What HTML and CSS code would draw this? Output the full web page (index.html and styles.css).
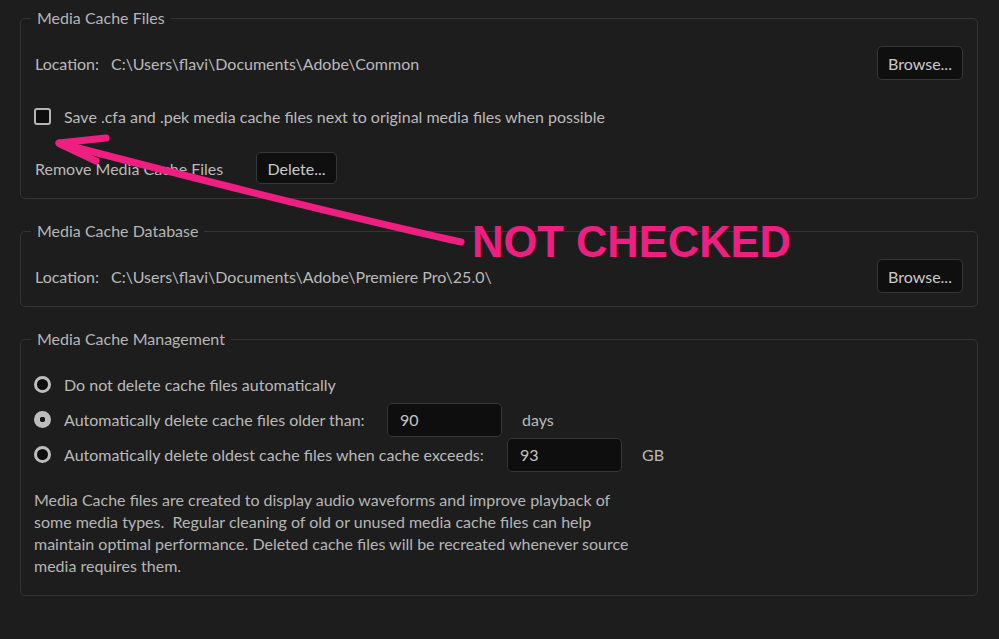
FILE: index.html
```html
<!DOCTYPE html>
<html lang="en">
<head>
    <meta charset="UTF-8">
    <meta name="viewport" content="width=device-width, initial-scale=1.0">
    <title>Media Cache</title>
    <link rel="stylesheet" href="styles.css">
</head>
<body>
    <div class="prefs">
        <fieldset class="group group-files">
            <legend>Media Cache Files</legend>
            <div class="row location-row">
                <span class="label">Location:</span>
                <span class="path">C:\Users\flavi\Documents\Adobe\Common</span>
                <button class="btn browse">Browse...</button>
            </div>
            <label class="row check-row">
                <span class="checkbox"></span>
                <span>Save .cfa and .pek media cache files next to original media files when possible</span>
            </label>
            <div class="row remove-row">
                <span class="remove-label">Remove Media Cache Files</span>
                <button class="btn delete">Delete...</button>
            </div>
        </fieldset>

        <fieldset class="group group-db">
            <legend>Media Cache Database</legend>
            <div class="row location-row">
                <span class="label">Location:</span>
                <span class="path">C:\Users\flavi\Documents\Adobe\Premiere Pro\25.0\</span>
                <button class="btn browse">Browse...</button>
            </div>
        </fieldset>

        <fieldset class="group group-manage">
            <legend>Media Cache Management</legend>
            <div class="radio-list">
                <label class="row radio-row">
                    <span class="radio"></span>
                    <span>Do not delete cache files automatically</span>
                </label>
                <label class="row radio-row">
                    <span class="radio selected"></span>
                    <span class="radio-label older">Automatically delete cache files older than:</span>
                    <span class="field">90</span>
                    <span class="unit">days</span>
                </label>
                <label class="row radio-row">
                    <span class="radio"></span>
                    <span class="radio-label exceeds">Automatically delete oldest cache files when cache exceeds:</span>
                    <span class="field">93</span>
                    <span class="unit">GB</span>
                </label>
            </div>
            <p class="note">Media Cache files are created to display audio waveforms and improve playback of<br>some media types.&nbsp; Regular cleaning of old or unused media cache files can help<br>maintain optimal performance. Deleted cache files will be recreated whenever source<br>media requires them.</p>
        </fieldset>
    </div>

    <!-- annotation drawn over the dialog -->
    <svg class="annotation" width="999" height="639" viewBox="0 0 999 639">
        <path d="M461,242 Q 300,206 59,143" />
        <path d="M59,143 L 106,138" />
        <path d="M60,144 L 96,161" />
    </svg>
    <div class="callout">NOT CHECKED</div>
</body>
</html>
```

FILE: styles.css
```css
* {
    margin: 0;
    padding: 0;
    box-sizing: border-box;
}

body {
    position: relative;
    width: 999px;
    height: 639px;
    overflow: hidden;
    background: #1d1d1d;
    color: #bababa;
    font-family: Lato, "Noto Sans", sans-serif;
    font-size: 16px;
}

.prefs {
    padding: 8px 0 0 20px;
    width: 978px;
}

.group {
    border: 1px solid #343434;
    border-radius: 5px;
    padding: 0 14px;
    margin-bottom: 22px;
}

.group legend {
    margin-left: -4px;
    padding: 0 6px;
    line-height: 20px;
    height: 20px;
    color: #b6b6b6;
}

.row {
    display: flex;
    align-items: center;
}

.location-row {
    height: 34px;
    margin-top: 18px;
}

.group-files {
    padding-bottom: 14px;
}

.group-db {
    padding-bottom: 13px;
}

.label {
    width: 76px;
}

.path {
    flex: 1;
}

.btn {
    font-family: inherit;
    font-size: 16px;
    color: #cacaca;
    background: #0f0f0f;
    border: 1px solid #383838;
    border-radius: 5px;
}

.browse {
    width: 86px;
    height: 34px;
}

.check-row {
    height: 20px;
    margin-top: 26px;
}

.checkbox {
    width: 17px;
    height: 17px;
    margin-right: 13px;
    border: 2.5px solid #b5b5b5;
    border-radius: 3px;
    background: #0d0d0d;
    margin-left: -1px;
}

.remove-row {
    height: 32px;
    margin-top: 26px;
}

.remove-label {
    width: 221px;
}

.delete {
    width: 81px;
    height: 32px;
}

.radio-list {
    margin-top: 18px;
}

.radio-row {
    height: 35px;
}

.radio {
    width: 17px;
    height: 17px;
    margin-left: -1px;
    margin-right: 13px;
    border: 3px solid #bdbdbd;
    border-radius: 50%;
    background: #0d0d0d;
}

.radio.selected {
    border: none;
    background: radial-gradient(circle, #151515 0 2.5px, #bdbdbd 3px);
}

.radio-label {
    white-space: nowrap;
}

.radio-label.older {
    width: 323px;
}

.radio-label.exceeds {
    width: 443px;
}

.field {
    width: 115px;
    height: 34px;
    padding-left: 12px;
    line-height: 32px;
    border: 1px solid #363636;
    border-radius: 5px;
    background: #0e0e0e;
    color: #c4c4c4;
}

.unit {
    margin-left: 20px;
}

.note {
    margin-top: 17px;
    margin-left: -1px;
    padding-bottom: 18px;
    line-height: 22px;
    color: #b6b6b6;
}

.annotation {
    position: absolute;
    left: 0;
    top: 0;
    pointer-events: none;
}

.annotation path {
    fill: none;
    stroke: #ef1f82;
    stroke-width: 7;
    stroke-linecap: round;
    stroke-linejoin: round;
}

.callout {
    position: absolute;
    left: 472px;
    top: 218px;
    font-family: "Liberation Sans", Arial, sans-serif;
    font-weight: bold;
    font-size: 43.5px;
    line-height: 48px;
    color: #ef1f82;
    white-space: nowrap;
}
```
